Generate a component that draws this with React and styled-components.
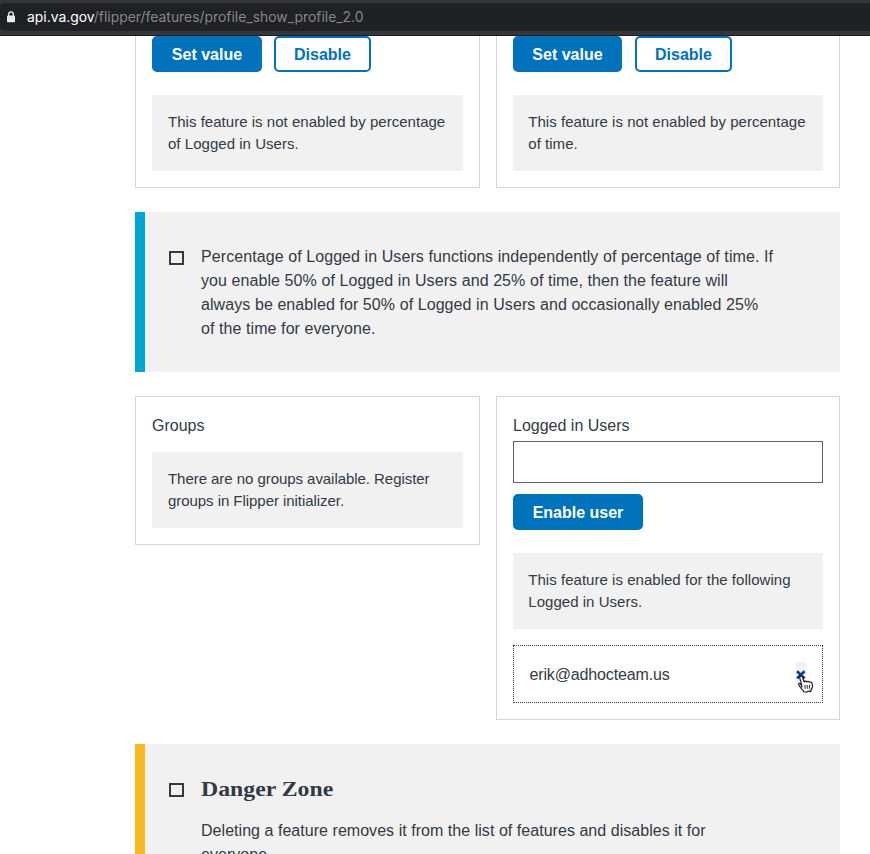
import React from "react";
import styled, { createGlobalStyle } from "styled-components";

const GlobalStyle = createGlobalStyle`
  * { box-sizing: border-box; }
  html, body { margin: 0; height: 100%; overflow: hidden; background: #fff; }
  #root { height: 100%; }
  p, h3 { margin: 0; }
  button, input { font: inherit; margin: 0; }
`;

const Window = styled.div`
  display: flex;
  flex-direction: column;
  height: 854px;
  width: 870px;
  overflow: hidden;
  color: #323a45;
  font-family: "Liberation Sans", Arial, sans-serif;
  font-size: 16px;
  line-height: 24px;
`;

const Toolbar = styled.header`
  flex: none;
  height: 36px;
  padding: 3px 0 4px;
  background: #35363a;
  border-bottom: 1px solid #1c1d1f;
`;

const AddressBar = styled.div`
  display: flex;
  align-items: center;
  height: 28px;
  padding-left: 8px;
  gap: 11px;
  border-radius: 8px 0 0 8px;
  margin-left: -2px;
  background: #202124;
`;

const Url = styled.span`
  font-family: Inter, sans-serif;
  font-size: 13.9px;
  color: #84878b;
  white-space: nowrap;
`;

const Host = styled.span`
  color: #fff;
`;

const Page = styled.main`
  flex: 1;
  min-height: 0;
  overflow: hidden;
  display: flex;
  flex-direction: column;
  gap: 24px;
  padding: 0 30px 0 135px;
`;

const CardRow = styled.section`
  flex: none;
  display: grid;
  grid-template-columns: 345px 344px;
  gap: 16px;
  align-items: start;
`;

const Card = styled.article`
  border: 1px solid #d6d7d9;
  border-top-width: ${(p) => (p.$cut ? 0 : "1px")};
  padding: ${(p) => (p.$cut ? 0 : "18px")} 16px 16px;
`;

const ButtonRow = styled.div`
  display: flex;
  gap: ${(p) => p.$gap || "12px"};
`;

const Button = styled.button`
  display: block;
  height: 36px;
  width: ${(p) => p.$width};
  padding: 2px 0 0;
  border: 2px solid #0071bb;
  border-radius: 5px;
  background: ${(p) => (p.$outline ? "#fff" : "#0071bb")};
  color: ${(p) => (p.$outline ? "#0071bb" : "#fff")};
  font-weight: 700;
  line-height: 30px;
`;

const Note = styled.p`
  margin-top: ${(p) => p.$top};
  padding: 16px 0 16px ${(p) => p.$inset || "16px"};
  background: #f1f1f1;
  font-size: 15px;
  line-height: 22px;
  letter-spacing: ${(p) => p.$spacing || "0.03px"};
  white-space: nowrap;
`;

const CardTitle = styled.div`
  display: block;
  line-height: 22px;
`;

const UserInput = styled.input`
  display: block;
  width: 100%;
  height: 42px;
  margin: 4px 0 11px;
  padding: 0 10px;
  border: 1px solid #5b616b;
  border-radius: 0;
  background: #fff;
`;

const UserRow = styled.div`
  display: flex;
  align-items: center;
  justify-content: space-between;
  height: 58px;
  margin-top: 16px;
  padding: 0 16px 0 15.5px;
  border: 1px dotted #323a45;
`;

const RemoveButton = styled.button`
  position: relative;
  width: 10px;
  height: 24px;
  padding: 0;
  border: 0;
  background: #f1f1f1;
`;

const RemoveIcon = styled.svg`
  display: block;
`;

const Pointer = styled.svg`
  position: absolute;
  left: 1px;
  top: 13px;
`;

const Alert = styled.section`
  flex: none;
  display: flex;
  gap: 16px;
  height: 160px;
  padding: 33px 0 0 24px;
  border-left: 10px solid ${(p) => p.$accent};
  background: #f1f1f1;
`;

const Glyph = styled.span`
  flex: none;
  width: 15px;
  height: 14px;
  margin: 6px 1px 0 0;
  border: 2px solid #323a45;
`;

const Text = styled.p`
  padding-top: ${(p) => p.$drop || 0};
  white-space: nowrap;
  letter-spacing: ${(p) => p.$spacing || "0.04px"};
`;

const AlertTitle = styled.h3`
  width: fit-content;
  margin-bottom: 17px;
  font-family: "Liberation Serif", serif;
  font-size: 22px;
  line-height: 24px;
  transform: scaleX(1.08);
  transform-origin: left;
`;

const LockIcon = () => (
  <svg width="10" height="12" viewBox="0 0 10 12">
    <path d="M2.7 5V3.2a2.3 2.3 0 0 1 4.6 0V5" fill="none" stroke="#e8eaed" strokeWidth="1.3" />
    <rect x="1" y="4.4" width="8" height="6.8" rx="0.8" fill="#e8eaed" />
  </svg>
);

const HandPointer = () => (
  <Pointer width="19" height="21" viewBox="0 0 18 20">
    <path
      d="M4.6 11.5 3.6 6.1 2.7 3.6C2.3 2.3 2.8 1.3 3.7 1.2 4.6 1 5.1 1.7 5.4 2.6L6.8 6.7C7.1 5.7 8.7 5.5 9.3 6.6 9.9 5.8 11.3 5.9 11.8 7 12.6 6.4 14.1 6.7 14.3 8.1L14.7 10.4C14.8 12.2 13.8 13.4 13.2 14.4L13.1 15.8 10.8 15.2 9.4 16.3 6.3 16 5.8 14.7C4.6 13.7 3.1 12.2 2 10 .9 8.4 1.7 7.5 2.8 8.1L4.6 10Z"
      fill="#fff"
      stroke="#1b1b1b"
      strokeWidth="1.1"
      strokeLinejoin="round"
    />
    <path d="M7.6 9.5V13.1M9.7 9.5V13.1M11.8 9.5V13.1" stroke="#1b1b1b" strokeWidth="0.9" />
  </Pointer>
);

export default function App() {
  return (
    <Window>
      <GlobalStyle />
      <Toolbar>
        <AddressBar>
          <LockIcon />
          <Url>
            <Host>api.va.gov</Host>/flipper/features/profile_show_profile_2.0
          </Url>
        </AddressBar>
      </Toolbar>
      <Page>
        <CardRow>
          <Card $cut>
            <ButtonRow>
              <Button $width="110px">Set value</Button>
              <Button $width="97px" $outline>Disable</Button>
            </ButtonRow>
            <Note $top="23px">
              This feature is not enabled by percentage
              <br />
              of Logged in Users.
            </Note>
          </Card>
          <Card $cut>
            <ButtonRow $gap="13px">
              <Button $width="109px">Set value</Button>
              <Button $width="97px" $outline>Disable</Button>
            </ButtonRow>
            <Note $top="23px" $inset="15.3px">
              This feature is not enabled by percentage
              <br />
              of time.
            </Note>
          </Card>
        </CardRow>
        <Alert $accent="#00a6d2">
          <Glyph />
          <Text $spacing="0.08px">
            Percentage of Logged in Users functions independently of percentage of time. If
            <br />
            you enable 50% of Logged in Users and 25% of time, then the feature will
            <br />
            always be enabled for 50% of Logged in Users and occasionally enabled 25%
            <br />
            of the time for everyone.
          </Text>
        </Alert>
        <CardRow>
          <Card>
            <CardTitle>Groups</CardTitle>
            <Note $top="15px" $spacing="-0.05px">
              There are no groups available. Register
              <br />
              groups in Flipper initializer.
            </Note>
          </Card>
          <Card>
            <CardTitle as="label" htmlFor="user">Logged in Users</CardTitle>
            <UserInput id="user" />
            <Button $width="130px">Enable user</Button>
            <Note $top="23px" $inset="15.3px">
              This feature is enabled for the following
              <br />
              Logged in Users.
            </Note>
            <UserRow>
              <Text $spacing="-0.14px" $drop="2px">erik@adhocteam.us</Text>
              <RemoveButton aria-label="Remove user">
                <RemoveIcon width="10" height="24" viewBox="0 0 10 24">
                  <path d="M1 9.2 8.6 16.4M8.6 9.2 1 16.4" stroke="#003e88" strokeWidth="2.6" />
                </RemoveIcon>
                <HandPointer />
              </RemoveButton>
            </UserRow>
          </Card>
        </CardRow>
        <Alert $accent="#fdb81e">
          <Glyph />
          <div>
            <AlertTitle>Danger Zone</AlertTitle>
            <Text $drop="1px">
              Deleting a feature removes it from the list of features and disables it for
              <br />
              everyone.
            </Text>
          </div>
        </Alert>
      </Page>
    </Window>
  );
}
